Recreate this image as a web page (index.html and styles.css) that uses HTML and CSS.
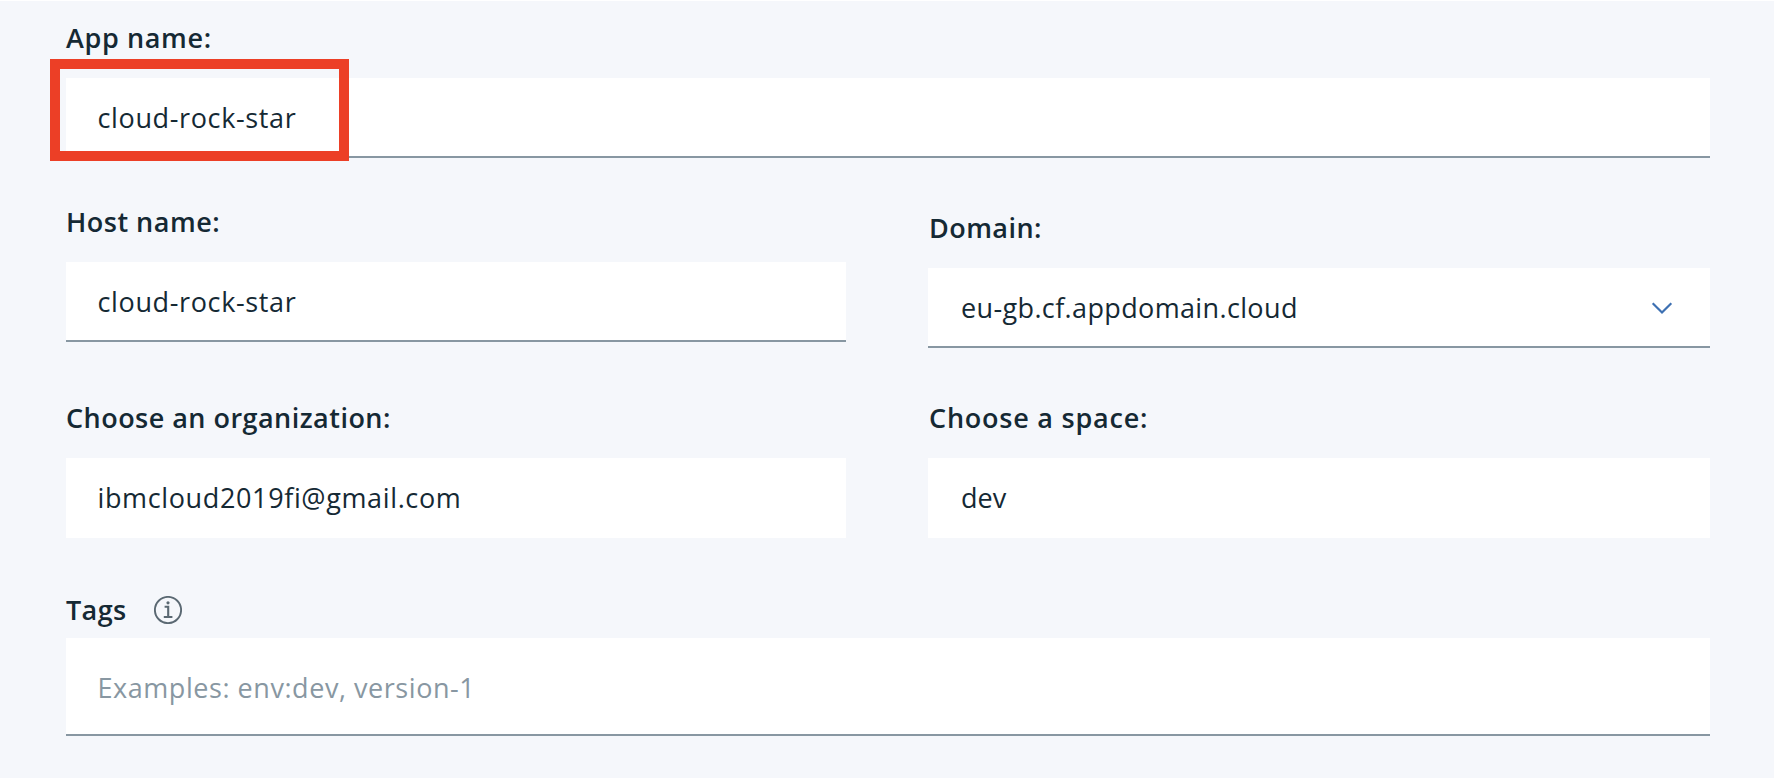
FILE: index.html
```html
<!DOCTYPE html>
<html lang="en">
<head>
<meta charset="utf-8">
<title>Create app</title>
<link rel="stylesheet" href="styles.css">
</head>
<body>
<main class="form">
  <div class="field">
    <div class="label app-label">App name:</div>
    <div class="input name-value">cloud-rock-star<span class="highlight"></span></div>
  </div>
  <div class="row row-host">
    <div class="field">
      <div class="label host-label">Host name:</div>
      <div class="input name-value">cloud-rock-star</div>
    </div>
    <div class="field field-right field-domain">
      <div class="label domain-label">Domain:</div>
      <div class="input select domain-value"><span>eu-gb.cf.appdomain.cloud</span>
        <svg class="chevron" width="22" height="14" viewBox="0 0 22 14"><path d="M1.7 2.2 11 11.5 20.3 2.2" fill="none" stroke="#3d70b2" stroke-width="2.2"/></svg>
      </div>
    </div>
  </div>
  <div class="row row-org">
    <div class="field">
      <div class="label org-label">Choose an organization:</div>
      <div class="input plain org-value">ibmcloud2019fi@gmail.com</div>
    </div>
    <div class="field field-right">
      <div class="label space-label">Choose a space:</div>
      <div class="input plain space-value">dev</div>
    </div>
  </div>
  <div class="field field-tags">
    <div class="label tags-label"><span>Tags</span>
      <svg class="info" width="28" height="28" viewBox="0 0 28 28"><circle cx="14" cy="14" r="13.1" fill="none" stroke="#5a6872" stroke-width="1.9"/><circle cx="14" cy="6.8" r="1.6" fill="#5a6872"/><path d="M10.6 10.8H14.2V21M9.8 21H18.4" fill="none" stroke="#5a6872" stroke-width="2.1"/></svg>
    </div>
    <div class="input tags-input">Examples: env:dev, version-1</div>
  </div>
</main>
</body>
</html>
```
FILE: styles.css
```css
* { box-sizing: border-box; }
body {
  margin: 0;
  height: 778px;
  background: #f5f7fb;
  border-top: 1px solid #fff;
  color: #152934;
  font-family: "Open Sans", "Noto Sans", sans-serif;
  font-size: 27px;
}
.form { padding: 19px 64px 0 66px; }
.field { display: flex; flex-direction: column; gap: 22px; }
.row { display: grid; grid-template-columns: 780px 782px; column-gap: 82px; }
.row-host { margin-top: 46px; }
.row-org { margin-top: 52px; }
.field-domain { padding-top: 6px; }
.field-tags { margin-top: 54px; gap: 10px; }
.label { height: 36px; line-height: 36px; font-weight: 600; white-space: nowrap; }
.field-right .label { padding-left: 1px; }
.input {
  position: relative;
  height: 80px;
  padding: 0 31.5px;
  line-height: 80px;
  background: #fff;
  border-bottom: 2px solid #8897a2;
  white-space: nowrap;
}
.field-right .input { padding-left: 33px; }
.plain { border-bottom-color: #fff; }
.select { display: flex; align-items: flex-start; justify-content: space-between; }
.chevron { margin: 33px 5.5px 0 0; }
.tags-label { display: flex; align-items: center; gap: 27px; }
.tags-input { height: 98px; padding-top: 2px; line-height: 96px; color: #8897a2; }
.highlight {
  position: absolute;
  left: -16px;
  top: -19px;
  width: 299px;
  height: 102px;
  border: 10px solid #ec3f26;
}
.app-label { letter-spacing: 0.63px; }
.host-label { letter-spacing: 0.5px; }
.domain-label { letter-spacing: 0.44px; }
.org-label { letter-spacing: 0.47px; }
.space-label { letter-spacing: 0.77px; }
.tags-label { letter-spacing: 0.37px; }
.name-value { letter-spacing: 0.63px; }
.domain-value { letter-spacing: 0.36px; }
.org-value { letter-spacing: 0.63px; }
.space-value { letter-spacing: 0; }
.tags-input { letter-spacing: 0.55px; }
```
